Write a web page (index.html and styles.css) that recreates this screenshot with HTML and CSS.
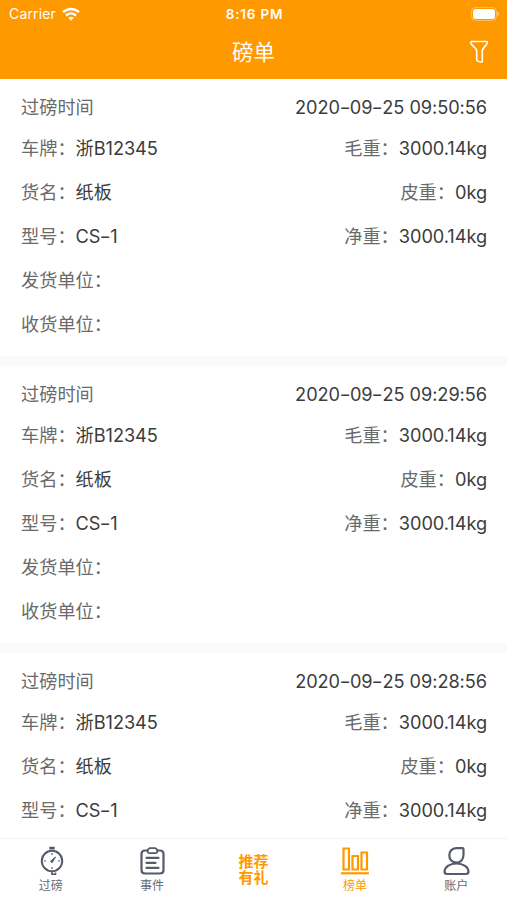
FILE: index.html
```html
<!DOCTYPE html>
<html lang="zh-CN">
<head>
    <meta charset="UTF-8">
    <meta name="viewport" content="width=device-width, initial-scale=1.0">
    <title>磅单</title>
    <link rel="stylesheet" href="styles.css">
</head>
<body>
    <div class="app">
        <header class="header">
            <div class="status-bar">
                <div class="carrier">
                    <span>Carrier</span>
                    <svg class="wifi" width="18" height="14" viewBox="0 0 18 14" fill="none" stroke="#fff" stroke-width="2.4">
                        <path d="M1 5.2C5.6 .9 12.4 .9 17 5.2"/>
                        <path d="M4 8.5c2.9-2.7 7.1-2.7 10 0"/>
                        <path d="M6.2 10.8c1.6-1.5 4-1.5 5.6 0L9 13.7z" fill="#fff" stroke="none"/>
                    </svg>
                </div>
                <div class="clock">8:16 PM</div>
                <div class="battery">
                    <svg width="30" height="14" viewBox="0 0 30 14">
                        <rect x="1.500" y=".5" width="25" height="13" rx="4" fill="none" stroke="#fff" stroke-opacity=".35"/>
                        <rect x="3" y="2" width="22" height="10" rx="2.500" fill="#fff"/>
                        <path d="M27.500 4.800c2 .8 2 3.600 0 4.400z" fill="#fff" fill-opacity=".5"/>
                    </svg>
                </div>
            </div>
            <div class="nav-bar">
                <h1 class="title">磅单</h1>
                <svg class="filter" width="20" height="24" viewBox="0 0 20 24" fill="none" stroke="#fff" stroke-width="1.600" stroke-linejoin="round">
                    <path d="M2.500 1.500h15q1.200 0 .8 1.400c-.6 2.400-5 5.500-5 7.600v10.300q0 1.600-1.500 1.300l-2.800-.8q-1.300-.4-1.300-1.700v-9.100c0-2.100-5.200-5.200-6-7.600q-.4-1.400.8-1.400z"/>
                </svg>
            </div>
        </header>

        <main class="list">
            <section class="card">
                <div class="row row-time"><span class="label">过磅时间</span><span class="value">2020<span class="dash">-</span>09<span class="dash">-</span>25 09:50:56</span></div>
                <div class="row">
                    <div><span class="label">车牌：</span><span class="value">浙B12345</span></div>
                    <div><span class="label">毛重：</span><span class="value">3000.14kg</span></div>
                </div>
                <div class="row">
                    <div><span class="label">货名：</span><span class="value">纸板</span></div>
                    <div><span class="label">皮重：</span><span class="value">0kg</span></div>
                </div>
                <div class="row">
                    <div><span class="label">型号：</span><span class="value">CS<span class="dash">-</span>1</span></div>
                    <div><span class="label">净重：</span><span class="value">3000.14kg</span></div>
                </div>
                <div class="row"><span class="label">发货单位：</span></div>
                <div class="row"><span class="label">收货单位：</span></div>
            </section>

            <section class="card">
                <div class="row row-time"><span class="label">过磅时间</span><span class="value">2020<span class="dash">-</span>09<span class="dash">-</span>25 09:29:56</span></div>
                <div class="row">
                    <div><span class="label">车牌：</span><span class="value">浙B12345</span></div>
                    <div><span class="label">毛重：</span><span class="value">3000.14kg</span></div>
                </div>
                <div class="row">
                    <div><span class="label">货名：</span><span class="value">纸板</span></div>
                    <div><span class="label">皮重：</span><span class="value">0kg</span></div>
                </div>
                <div class="row">
                    <div><span class="label">型号：</span><span class="value">CS<span class="dash">-</span>1</span></div>
                    <div><span class="label">净重：</span><span class="value">3000.14kg</span></div>
                </div>
                <div class="row"><span class="label">发货单位：</span></div>
                <div class="row"><span class="label">收货单位：</span></div>
            </section>

            <section class="card">
                <div class="row row-time"><span class="label">过磅时间</span><span class="value">2020<span class="dash">-</span>09<span class="dash">-</span>25 09:28:56</span></div>
                <div class="row">
                    <div><span class="label">车牌：</span><span class="value">浙B12345</span></div>
                    <div><span class="label">毛重：</span><span class="value">3000.14kg</span></div>
                </div>
                <div class="row">
                    <div><span class="label">货名：</span><span class="value">纸板</span></div>
                    <div><span class="label">皮重：</span><span class="value">0kg</span></div>
                </div>
                <div class="row">
                    <div><span class="label">型号：</span><span class="value">CS<span class="dash">-</span>1</span></div>
                    <div><span class="label">净重：</span><span class="value">3000.14kg</span></div>
                </div>
            </section>
        </main>

        <nav class="tab-bar">
            <a class="tab">
                <svg width="30" height="30" viewBox="0 0 30 30" fill="none" stroke="#565a69" stroke-width="2">
                    <circle cx="16" cy="15" r="10.200"/>
                    <path d="M14.500 3.500V2h3v1.500" stroke-width="2.400"/>
                    <path d="M16 25v3.300h3.500V26.500" stroke-width="1.600"/>
                    <path d="M16 7v2M16 21v2M8 15h2M22 15h2" stroke-width="1.200"/>
                    <path d="M14.500 15.300l5-4.300-3.300 5.600z" fill="#565a69" stroke-width="1"/>
                </svg>
                <span>过磅</span>
            </a>
            <a class="tab">
                <svg width="30" height="30" viewBox="0 0 30 30" fill="none" stroke="#565a69" stroke-width="2.200" stroke-linecap="round" stroke-linejoin="round">
                    <path d="M10.500 4.500H8Q4.500 4.500 4.500 8v16q0 3.500 3.500 3.500h15q3.500 0 3.500-3.500V8q0-3.500-3.500-3.500H20.500"/>
                    <path d="M12.500 2.200h6q2 1 2 3.200-.4 1.800-2 1.800h-6q-1.600 0-2-1.800 0-2.200 2-3.200z" stroke-width="1.800"/>
                    <path d="M9.500 11.800h12M9.500 16.800h9M9.500 21.800h12"/>
                </svg>
                <span>事件</span>
            </a>
            <a class="tab tab-center"><span>推荐</span><span>有礼</span></a>
            <a class="tab active">
                <svg width="30" height="30" viewBox="0 0 30 30" fill="none" stroke="#ff9900" stroke-width="2.200">
                    <path d="M3.500 2.500H9v21H3.500zM12.500 10H18v13.500h-5.500zM21.500 6.500H27v17h-5.500z"/>
                    <path d="M1 27.300h28"/>
                </svg>
                <span>榜单</span>
            </a>
            <a class="tab">
                <svg width="30" height="30" viewBox="0 0 30 30" fill="none" stroke="#565a69" stroke-width="2.200" stroke-linejoin="round">
                    <path d="M15 2.200h6.500q1 0 1 1v5.500c0 4.600-3 8-7.200 8s-7-3.200-7-7.200 2.700-7.300 6.700-7.300z"/>
                    <path d="M15.500 17.500c-7 0-11.800 3.500-12 8q0 2.500 2.500 2.500h19q2.500 0 2.500-2.500c-.2-4.500-5-8-12-8z"/>
                </svg>
                <span>账户</span>
            </a>
        </nav>
    </div>
</body>
</html>
```

FILE: styles.css
```css
* {
    box-sizing: border-box;
}
body {
    margin: 0;
    font-family: Inter, "Noto Sans CJK SC", sans-serif;
    background-color: #fafafa;
}
.app {
    display: flex;
    flex-direction: column;
    height: 900px;
    overflow: hidden;
}
.header {
    flex: none;
    height: 79px;
    background-color: #ff9900;
    color: #fff;
}
.status-bar {
    display: grid;
    grid-template-columns: 1fr auto 1fr;
    align-items: center;
    height: 27px;
    padding: 0 7px 0 9px;
}
.carrier {
    display: flex;
    align-items: center;
    gap: 6px;
    font-size: 14px;
    letter-spacing: 0.15px;
}
.clock {
    font-size: 13.5px;
    font-weight: 600;
    letter-spacing: 0.8px;
}
.battery {
    display: flex;
    justify-content: flex-end;
}
.nav-bar {
    display: grid;
    grid-template-columns: 1fr auto 1fr;
    align-items: center;
    height: 50px;
    padding: 0 18px;
}
.title {
    grid-column: 2;
    margin: 0;
    font-size: 21.5px;
    font-weight: 400;
    line-height: 30px;
}
.filter {
    justify-self: end;
}
.list {
    flex: 1;
    min-height: 0;
    overflow: hidden;
}
.card {
    height: 277px;
    margin-bottom: 10px;
    padding: 9px 20px 10px 21px;
    background-color: #fff;
}
.row {
    display: flex;
    align-items: center;
    justify-content: space-between;
    height: 44px;
    font-size: 18.2px;
    line-height: 26px;
    white-space: nowrap;
}
.row-time {
    height: 38px;
}
.label {
    color: #6a6a6a;
}
.value {
    color: #3c3c3c;
    letter-spacing: -0.06px;
}
.dash {
    display: inline-block;
    margin: 0 0.8px;
    transform: scaleX(1.35);
}
.tab-bar {
    flex: none;
    display: flex;
    height: 62px;
    border-top: 1px solid #f2f2f2;
    background-color: #fff;
}
.tab {
    flex: 1;
    display: flex;
    flex-direction: column;
    align-items: center;
    padding-top: 7px;
    font-size: 12px;
    line-height: 20px;
    color: #666a76;
}
.tab-center {
    padding-top: 15px;
    font-size: 15px;
    font-weight: 700;
    line-height: 16px;
    color: #ff9900;
}
.active {
    color: #ff9900;
}
```
